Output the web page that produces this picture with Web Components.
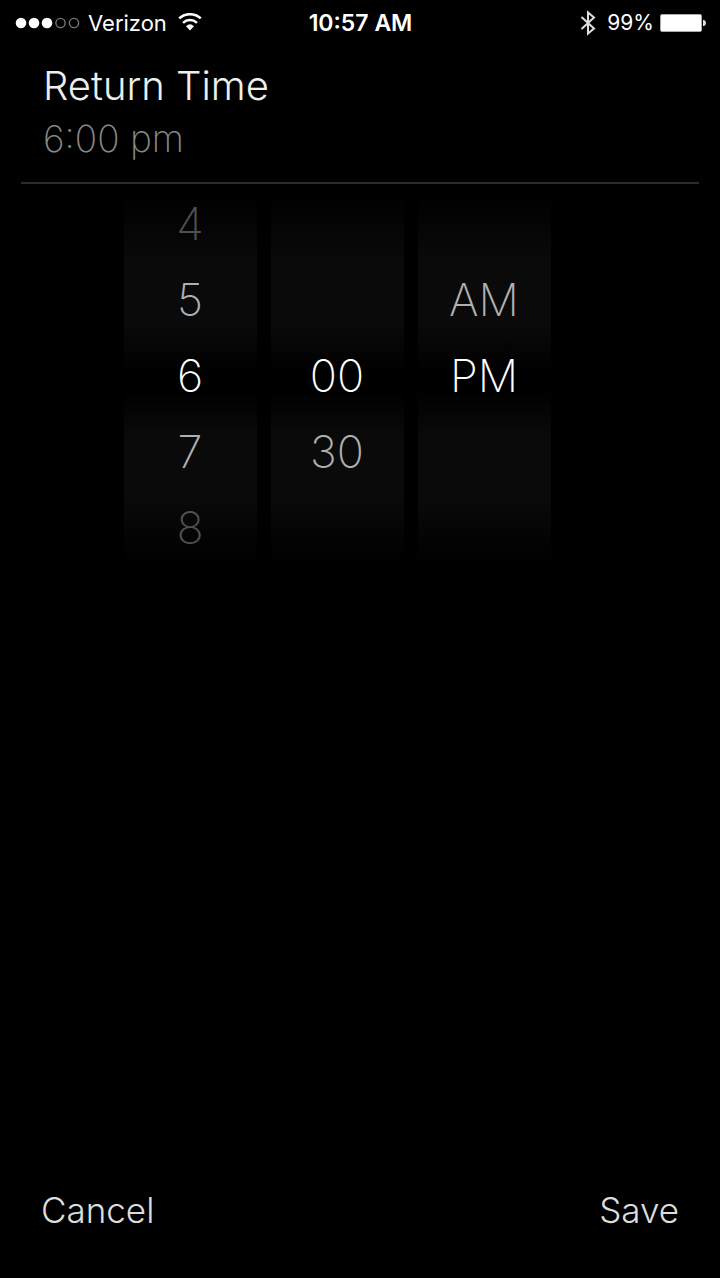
<!DOCTYPE html>
<html lang="en">
<head>
<meta charset="utf-8">
<meta name="viewport" content="width=device-width, initial-scale=1">
<title>Return Time</title>
<style>
	html, body {
		height: 100%;
		margin: 0;
		background: #000;
	}

	body {
		color: #fff;
		font-family: Inter, "Liberation Sans", sans-serif;
	}
</style>
</head>
<body>

<return-time-screen>
	<status-bar slot="status" carrier="Verizon" time="10:57 AM" battery="99%"></status-bar>
	<time-header slot="header">
		<span slot="title">Return Time</span>
		<span slot="value">6:00 pm</span>
	</time-header>
	<time-wheel name="Hour" values="4,5,6,7,8" selected="2"></time-wheel>
	<time-wheel name="Minute" values="00,30" selected="0"></time-wheel>
	<time-wheel name="Period" values="AM,PM" selected="1"></time-wheel>
	<action-button slot="actions">Cancel</action-button>
	<action-button slot="actions">Save</action-button>
</return-time-screen>

<script>
class ReturnTimeScreen extends HTMLElement {
	constructor() {
		super();

		let shadow = this.attachShadow({mode : 'open'});
		shadow.innerHTML =
			`
			<style>
				:host {
					display: flex;
					flex-direction: column;
					min-height: 100%;
				}

				main {
					flex: 1;
					display: flex;
					justify-content: center;
					align-items: flex-start;
					gap: 14px;
					padding: 2px 46px 0 0;
				}

				footer {
					display: flex;
					justify-content: space-between;
					padding: 0 41px 44px;
				}
			</style>

			<slot name="status"></slot>
			<slot name="header"></slot>
			<main><slot></slot></main>
			<footer><slot name="actions"></slot></footer>
			`;
	}
}

class StatusBar extends HTMLElement {
	constructor() {
		super();

		let shadow = this.attachShadow({mode : 'open'});
		shadow.innerHTML =
			`
			<style>
				:host {
					display: grid;
					grid-template-columns: 1fr auto 1fr;
					align-items: center;
					height: 46px;
					padding: 0 14px 0 15px;
					font-size: 22px;
					line-height: 28px;
				}

				.side {
					display: flex;
					align-items: center;
					gap: 8px;
				}

				.right {
					justify-content: flex-end;
					gap: 6px;
				}

				#time {
					font-size: 23px;
					font-weight: 600;
				}

				#battery {
					font-size: 21px;
				}

				svg {
					display: block;
					flex: none;
				}
			</style>

			<div class="side">
				<svg width="65" height="12" viewBox="0 0 65 12" fill="#fff">
					<circle cx="6" cy="6" r="5.3"/>
					<circle cx="19" cy="6" r="5.3"/>
					<circle cx="32" cy="6" r="5.3"/>
					<g fill="none" stroke="#777" stroke-width="1.4">
						<circle cx="45.5" cy="6" r="4.6"/>
						<circle cx="59" cy="6" r="4.6"/>
					</g>
				</svg>
				<span id="carrier"></span>
				<svg width="30" height="20" viewBox="-3 1 30 20" fill="none" stroke="#fff" stroke-width="2.5">
					<path d="M1.2 6.4C7.2.8 16.8.8 22.8 6.4"/>
					<path d="M5 10.8C9 7.1 15 7.1 19 10.8"/>
					<path d="M12 18.2L8.3 14.3C10.4 12.1 13.6 12.1 15.7 14.3Z" fill="#fff" stroke-width="0.6"/>
				</svg>
			</div>
			<span id="time"></span>
			<div class="side right">
				<svg width="22" height="26" viewBox="0 0 22 26" fill="none" stroke="#ddd" stroke-width="2">
					<path d="M2.5 7L15 18.5L9 23.5V2.5L15 7.5L2.5 19"/>
				</svg>
				<span id="battery"></span>
				<svg width="46" height="18" viewBox="0 0 46 18">
					<rect x="0.5" y="0.5" width="41" height="17" rx="1.5" fill="#fff" stroke="#aaa"/>
					<path d="M43 6H44.2Q46 7 46 9T44.2 12H43Z" fill="#ddd"/>
				</svg>
			</div>
			`;
	}

	connectedCallback() {
		for (let id of ['carrier', 'time', 'battery']) {
			this.shadowRoot.getElementById(id).textContent = this.getAttribute(id);
		}
	}
}

class TimeHeader extends HTMLElement {
	constructor() {
		super();

		let shadow = this.attachShadow({mode : 'open'});
		shadow.innerHTML =
			`
			<style>
				:host {
					display: block;
					margin: 0 21px;
					padding: 14px 22px 16px;
					border-bottom: 2px solid #2b2b2b;
					font-weight: 300;
				}

				h1, p {
					margin: 0;
					font-weight: inherit;
				}

				h1 {
					color: #eee;
					font-size: 40px;
					line-height: 52px;
				}

				p {
					color: #888;
					font-size: 37px;
					font-weight: 200;
					line-height: 54px;
				}
			</style>

			<h1><slot name="title"></slot></h1>
			<p><slot name="value"></slot></p>
			`;
	}
}

class TimeWheel extends HTMLElement {
	constructor() {
		super();
		this.attachShadow({mode : 'open'});
	}

	connectedCallback() {
		let name = this.getAttribute('name');
		let values = this.getAttribute('values').split(',');
		let selected = Number(this.getAttribute('selected'));

		//The selected value always sits in the third of the five rows
		let options = values.map((value, i) =>
			`
			<label class="far${Math.abs(i - selected)}" style="grid-row: ${i - selected + 3}">
				<input type="radio" name="${name}" value="${value}" ${i === selected ? 'checked' : ''}>${value}
			</label>
			`).join('');

		this.shadowRoot.innerHTML =
			`
			<style>
				:host {
					display: block;
					flex: 0 1 133px;
				}

				#wheel {
					display: grid;
					grid-template-rows: repeat(5, 76px);
					background: linear-gradient(#000 2%, #0a0a0a 20%, #0a0a0a 36%, #000 49%, #000 54%, #0a0a0a 66%, #0a0a0a 82%, #000 99%);
				}

				label {
					display: flex;
					align-items: center;
					justify-content: center;
					font-size: 45px;
					font-weight: 200;
					line-height: 52px;
				}

				input {
					appearance: none;
					width: 0;
					margin: 0;
				}

				.far0 { color: #fff; }
				.far1 { color: #b0b0b0; }
				.far2 { color: #505050; }
			</style>

			<div id="wheel" role="radiogroup" aria-label="${name}">${options}</div>
			`;
	}
}

class ActionButton extends HTMLElement {
	constructor() {
		super();

		let shadow = this.attachShadow({mode : 'open'});
		shadow.innerHTML =
			`
			<style>
				:host {
					display: block;
				}

				button {
					padding: 0;
					border: 0;
					background: none;
					color: #ddd;
					font-family: inherit;
					font-size: 35px;
					font-weight: 300;
					line-height: 48px;
				}
			</style>

			<button type="button"><slot></slot></button>
			`;
	}
}

window.customElements.define('return-time-screen', ReturnTimeScreen);
window.customElements.define('status-bar', StatusBar);
window.customElements.define('time-header', TimeHeader);
window.customElements.define('time-wheel', TimeWheel);
window.customElements.define('action-button', ActionButton);
</script>
</body>
</html>
